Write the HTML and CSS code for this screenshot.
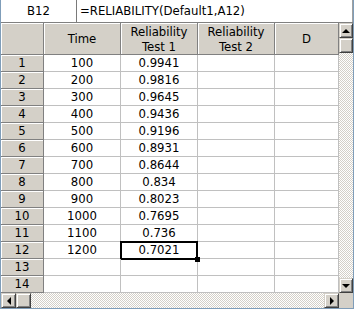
FILE: index.html
```html
<!DOCTYPE html>
<html lang="en">
<head>
  <meta charset="UTF-8">
  <title>Reliability sheet</title>
  <link rel="stylesheet" href="styles.css">
</head>
<body>
  <div class="window">
    <div class="formula-row">
      <div class="namebox">B12</div>
      <div class="formula">=RELIABILITY(Default1,A12)</div>
    </div>

    <div class="main">
      <div class="sheet">
        <div class="hdr corner"></div>
        <div class="hdr">Time</div>
        <div class="hdr">Reliability<br>Test 1</div>
        <div class="hdr">Reliability<br>Test 2</div>
        <div class="hdr">D</div>

        <div class="rowhdr">1</div><div class="cell">100</div><div class="cell">0.9941</div><div class="cell"></div><div class="cell"></div>
        <div class="rowhdr">2</div><div class="cell">200</div><div class="cell">0.9816</div><div class="cell"></div><div class="cell"></div>
        <div class="rowhdr">3</div><div class="cell">300</div><div class="cell">0.9645</div><div class="cell"></div><div class="cell"></div>
        <div class="rowhdr">4</div><div class="cell">400</div><div class="cell">0.9436</div><div class="cell"></div><div class="cell"></div>
        <div class="rowhdr">5</div><div class="cell">500</div><div class="cell">0.9196</div><div class="cell"></div><div class="cell"></div>
        <div class="rowhdr">6</div><div class="cell">600</div><div class="cell">0.8931</div><div class="cell"></div><div class="cell"></div>
        <div class="rowhdr">7</div><div class="cell">700</div><div class="cell">0.8644</div><div class="cell"></div><div class="cell"></div>
        <div class="rowhdr">8</div><div class="cell">800</div><div class="cell">0.834</div><div class="cell"></div><div class="cell"></div>
        <div class="rowhdr">9</div><div class="cell">900</div><div class="cell">0.8023</div><div class="cell"></div><div class="cell"></div>
        <div class="rowhdr">10</div><div class="cell">1000</div><div class="cell">0.7695</div><div class="cell"></div><div class="cell"></div>
        <div class="rowhdr">11</div><div class="cell">1100</div><div class="cell">0.736</div><div class="cell"></div><div class="cell"></div>
        <div class="rowhdr">12</div><div class="cell">1200</div><div class="cell selected">0.7021</div><div class="cell"></div><div class="cell"></div>
        <div class="rowhdr">13</div><div class="cell"></div><div class="cell"></div><div class="cell"></div><div class="cell"></div>
        <div class="rowhdr">14</div><div class="cell"></div><div class="cell"></div><div class="cell"></div><div class="cell"></div>
      </div>

      <div class="vscroll">
        <div class="btn"><span class="arrow up"></span></div>
        <div class="btn"></div>
        <div class="track"></div>
        <div class="btn"><span class="arrow down"></span></div>
      </div>
    </div>

    <div class="hscroll">
      <div class="btn"><span class="arrow left"></span></div>
      <div class="btn"></div>
      <div class="track"></div>
      <div class="btn"><span class="arrow right"></span></div>
      <div class="sizebox"></div>
    </div>
  </div>
</body>
</html>
```

FILE: styles.css
```css
body {
  margin: 0;
  font-family: "DejaVu Sans Condensed", "Liberation Sans", sans-serif;
  font-size: 13px;
  color: #000;
  background: #fff;
}
.window {
  width: 354px;
  height: 309px;
  box-sizing: border-box;
  border-left: 1px solid #7f9db9;
  border-right: 1px solid #7f9db9;
  border-bottom: 1px solid #7f9db9;
  display: flex;
  flex-direction: column;
}
.formula-row {
  display: flex;
  height: 23px;
  box-sizing: border-box;
  border-bottom: 1px solid #808080;
}
.namebox {
  width: 75px;
  text-align: center;
  line-height: 22px;
}
.formula {
  flex: 1;
  border-left: 1px solid #7a7a7a;
  border-right: 1px solid #a0a0a0;
  padding-left: 3px;
  line-height: 22px;
  white-space: nowrap;
}
.main {
  display: flex;
}
.sheet {
  display: grid;
  grid-template-columns: 43px 77px 77px 77px 64px;
  grid-template-rows: 32px repeat(14, 17px);
}
.hdr, .rowhdr {
  background: #d4d0c8;
  box-sizing: border-box;
  border-right: 1px solid #808080;
  border-bottom: 1px solid #808080;
  box-shadow: inset 1px 1px #fff;
  display: flex;
  align-items: center;
  justify-content: center;
  text-align: center;
}
.hdr {
  line-height: 15px;
}
.rowhdr {
  line-height: 16px;
}
.cell {
  box-sizing: border-box;
  border-right: 1px solid #c0c0c0;
  border-bottom: 1px solid #c0c0c0;
  text-align: center;
  line-height: 16px;
  position: relative;
}
.selected::after {
  content: "";
  position: absolute;
  left: -1px;
  top: -1px;
  right: -1px;
  bottom: -2px;
  border: 2px solid #000;
}
.selected::before {
  content: "";
  position: absolute;
  right: -3px;
  bottom: -4px;
  width: 5px;
  height: 5px;
  background: #000;
  z-index: 1;
}
.vscroll {
  width: 14px;
  display: flex;
  flex-direction: column;
}
.hscroll {
  height: 15px;
  display: flex;
}
.btn {
  flex: none;
  width: 15px;
  height: 15px;
  box-sizing: border-box;
  background: #d4d0c8;
  border: 1px solid;
  border-color: #d4d0c8 #404040 #404040 #d4d0c8;
  box-shadow: inset 1px 1px #fff, inset -1px -1px #808080;
  display: flex;
  align-items: center;
  justify-content: center;
}
.vscroll .btn {
  width: 14px;
}
.track {
  flex: 1;
  background: repeating-conic-gradient(#fff 0 25%, #d4d0c8 0 50%) 0 0 / 2px 2px;
}
.sizebox {
  width: 14px;
  background: #d4d0c8;
}
.arrow {
  width: 0;
  height: 0;
  border: 4px solid transparent;
}
.arrow.up {
  border-bottom-color: #000;
  border-top-width: 0;
}
.arrow.down {
  border-top-color: #000;
  border-bottom-width: 0;
}
.arrow.left {
  border-right-color: #000;
  border-left-width: 0;
}
.arrow.right {
  border-left-color: #000;
  border-right-width: 0;
}
```
